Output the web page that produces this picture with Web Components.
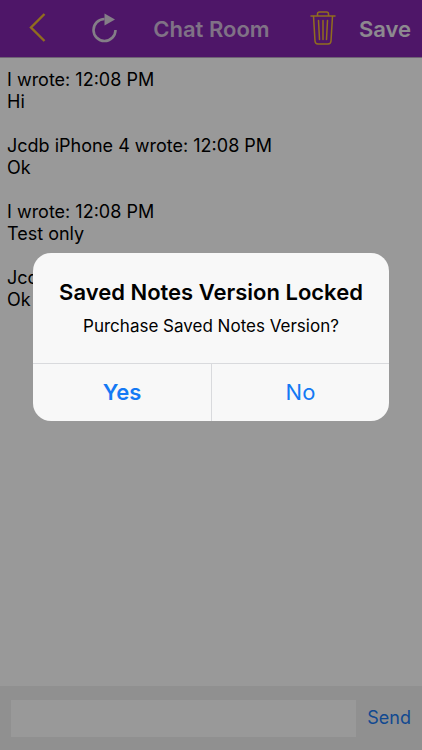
<!DOCTYPE html>
<html lang="en">
<head>
<meta charset="utf-8">
<meta name="viewport" content="width=device-width, initial-scale=1">
<title>Chat Room</title>
<style>
  html, body { height: 100%; margin: 0; }
  body { font-family: Inter, "Liberation Sans", sans-serif; color: #000; }
</style>
</head>
<body>
<chat-app></chat-app>

<script>
const define = (name, html) => {
  const template = document.createElement('template');
  template.innerHTML = html;
  customElements.define(name, class extends HTMLElement {
    constructor() {
      super();
      this.attachShadow({ mode: 'open' }).append(template.content.cloneNode(true));
    }
  });
};

define('chat-header', `
  <style>
    :host { display: block; background: #8226ae; border-bottom: 1px solid #b9a5c4; }
    header { display: flex; align-items: center; height: 57px; padding: 0 11px 0 24px; }
    button { border: 0; padding: 0; background: none; color: #ebe4ee; font-family: inherit; font-size: 22px; font-weight: 600; line-height: 28px; }
    svg { display: block; }
    .back { margin-right: 38px; }
    h1 { flex: 1; margin: 0; padding-right: 6px; text-align: center; color: #d5bfdf; font-size: 22px; font-weight: 600; line-height: 28px; white-space: nowrap; }
    .trash { margin-right: 22px; }
  </style>
  <header>
    <button class="back" aria-label="Back">
      <svg width="28" height="36" viewBox="0 0 28 36" fill="none" stroke="#f2b632" stroke-width="2.400"><path d="M20.500 3 7 16.500 20.500 30"/></svg>
    </button>
    <button aria-label="Refresh">
      <svg width="30" height="36" viewBox="0 0 30 36"><path d="M14.500 8A11 11 0 1 0 25.500 19" fill="none" stroke="#ddd2e2" stroke-width="2.600"/><path d="M14.500 2.500V14.500L25 8.500Z" fill="#ddd2e2"/></svg>
    </button>
    <h1>Chat Room</h1>
    <button class="trash" aria-label="Delete">
      <svg width="28" height="38" viewBox="0 0 28 38" fill="none" stroke="#f2b632" stroke-width="1.500" stroke-linejoin="round" stroke-linecap="round"><path d="M2 6H26M8.500 6V4Q8.500 2 10.500 2H17.500Q19.500 2 19.500 4V6M4.500 6 6 31Q6.200 34 9 34H19Q21.800 34 22 31L23.500 6M9.500 10.500 10.500 29.500M14 10.500V29.500M18.500 10.500 17.500 29.500"/></svg>
    </button>
    <button>Save</button>
  </header>`);

define('chat-message', `
  <style>
    :host { display: block; font-size: 18px; line-height: 22px; }
    p { margin: 0; }
  </style>
  <p><slot name="meta"></slot></p>
  <p><slot></slot></p>`);

define('message-composer', `
  <style>
    :host { display: block; background: #f0f0f0; }
    form { display: flex; align-items: center; gap: 11px; height: 64px; padding: 0 11px; }
    input { flex: 1; min-width: 0; height: 37px; box-sizing: border-box; border: 0; padding: 0 8px; background: #fff; font: inherit; font-size: 18px; }
    button { border: 0; padding: 0; background: none; color: #1d7bf0; font: inherit; font-size: 18px; line-height: 24px; }
  </style>
  <form onsubmit="return false">
    <input type="text" aria-label="Message">
    <button type="submit">Send</button>
  </form>`);

define('alert-dialog', `
  <style>
    :host { position: absolute; inset: 0; display: flex; align-items: center; justify-content: center; padding: 0 33px; box-sizing: border-box; background: rgba(0,0,0,.4); }
    section { flex: 1; max-width: 400px; margin-top: -77px; border-radius: 18px; overflow: hidden; background: #f8f8f8; text-align: center; }
    .text { padding: 25px 8px 26px; }
    h2 { margin: 0; font-size: 22px; font-weight: 600; line-height: 28px; }
    p { margin: 9px 0 0; font-size: 17px; line-height: 22px; }
    .actions { display: grid; grid-template-columns: 1fr 1fr; border-top: 1px solid #d9dadd; }
  </style>
  <section role="alertdialog" aria-labelledby="title" aria-describedby="detail">
    <div class="text">
      <h2 id="title"><slot name="title"></slot></h2>
      <p id="detail"><slot></slot></p>
    </div>
    <div class="actions"><slot name="action"></slot></div>
  </section>`);

define('alert-action', `
  <style>
    :host { display: block; }
    :host([divided]) { border-left: 1px solid #d9dadd; }
    button { width: 100%; height: 57px; border: 0; padding: 0; background: none; color: #1479f4; font: inherit; font-size: 22px; }
    :host([preferred]) button { font-weight: 600; }
  </style>
  <button><slot></slot></button>`);

define('chat-app', `
  <style>
    :host { position: relative; display: flex; flex-direction: column; min-height: 100%; background: #fff; }
    main { flex: 1; display: flex; flex-direction: column; gap: 22px; padding: 11px 7px; }
  </style>
  <chat-header></chat-header>
  <main>
    <chat-message><span slot="meta">I wrote: 12:08 PM</span>Hi</chat-message>
    <chat-message><span slot="meta">Jcdb iPhone 4 wrote: 12:08 PM</span>Ok</chat-message>
    <chat-message><span slot="meta">I wrote: 12:08 PM</span>Test only</chat-message>
    <chat-message><span slot="meta">Jcdb iPhone 4 wrote: 12:08 PM</span>Ok</chat-message>
  </main>
  <message-composer></message-composer>
  <alert-dialog>
    <span slot="title">Saved Notes Version Locked</span>
    Purchase Saved Notes Version?
    <alert-action slot="action" preferred>Yes</alert-action>
    <alert-action slot="action" divided>No</alert-action>
  </alert-dialog>`);
</script>
</body>
</html>
